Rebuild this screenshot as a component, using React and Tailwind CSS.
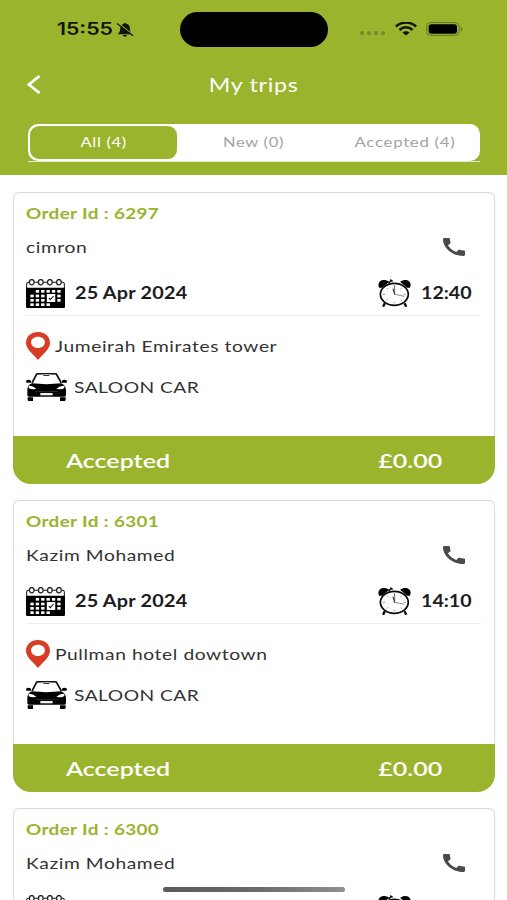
import React from "react";

const trips = [
  { id: "6297", name: "cimron", date: "25 Apr 2024", time: "12:40", place: "Jumeirah Emirates tower", car: "SALOON CAR", status: "Accepted", price: "£0.00" },
  { id: "6301", name: "Kazim Mohamed", date: "25 Apr 2024", time: "14:10", place: "Pullman hotel dowtown", car: "SALOON CAR", status: "Accepted", price: "£0.00" },
  { id: "6300", name: "Kazim Mohamed" },
];

const BellOff = () => (
  <svg className="ml-[2px] h-4 w-[18px]" viewBox="0 0 18 16" fill="none">
    <path d="M2 11.8C4 10.2 4 8.8 4.3 6 4.7 3.2 6 2.2 7.6 1.8 8 .6 10 .6 10.4 1.8c2 .4 3.1 1.8 3.4 4.2.3 2.8.4 4.2 2.3 5.8v.4H2zM6.8 13h4.4c-.3 2.3-4 2.3-4.4 0z" fill="#10150a" />
    <path d="M1.6 .8l15.8 12.2" stroke="#9ab42d" strokeWidth="1.2" />
    <path d="M1 1.6l16 12.2" stroke="#10150a" strokeWidth="1.2" />
  </svg>
);

const Wifi = () => (
  <svg className="h-[14px] w-[22px]" viewBox="0 0 22 14" fill="none" stroke="#10150a" strokeWidth="2.5">
    <path d="M.9 4.5C6.4-.7 15.6-.7 21.1 4.5" />
    <path d="M4.5 8c3.8-3.6 9.2-3.6 13 0" />
    <path d="M7.5 10.6c2-1.9 5-1.9 7 0L11 13.6z" fill="#10150a" stroke="none" />
  </svg>
);

const Battery = () => (
  <svg className="h-[14px] w-[37px]" viewBox="0 0 37 14">
    <rect x=".6" y=".6" width="32.6" height="12.8" rx="4" fill="none" stroke="#64762a" />
    <rect x="2.6" y="2.3" width="28.4" height="9.4" rx="2.6" fill="#000" />
    <path d="M34.8 4.8c2 .6 2 3.8 0 4.4z" fill="#64762a" />
  </svg>
);

const Calendar = () => (
  <svg className="h-[29px] w-[39px]" viewBox="0 0 116 87" preserveAspectRatio="none">
    <path d="M2 28V15q0-5 5-5h102q5 0 5 5v13" fill="#fff" stroke="#111" strokeWidth="3" />
    <path d="M0 26h116v57q0 4-4 4H4q-4 0-4-4z" fill="#000" />
    {[17, 44, 71, 98].map((x) => (
      <ellipse key={x} cx={x} cy="9.5" rx="7" ry="8" fill="#fff" stroke="#222" strokeWidth="3.8" />
    ))}
    <g fill="#fff">
      {[29, 45, 61, 77, 93].map((x) => <rect key={x} x={x} y="33" width="10" height="8" />)}
      {[13, 29, 45, 93].map((x) => <rect key={x} x={x} y="47" width="10" height="8" />)}
      {[13, 29, 45, 93].map((x) => <rect key={x} x={x} y="60" width="10" height="8" />)}
      {[13, 29, 45, 61].map((x) => <rect key={x} x={x} y="73" width="10" height="8" />)}
      <rect x="62" y="45" width="25" height="24" />
    </g>
    <path d="M68 57l4 5 10-11" fill="none" stroke="#111" strokeWidth="3" />
  </svg>
);

const Clock = () => (
  <svg className="h-7 w-[33px]" viewBox="0 0 97 84" preserveAspectRatio="none">
    <path d="M20 73l-5 10M78 73l5 10" stroke="#000" strokeWidth="7" />
    <path d="M3 26C-5 6 16-4 33 8L12 26z" fill="#000" />
    <path d="M94 26c8-20-12-30-29-18l20 18z" fill="#000" />
    <path d="M31 12l9-8M36 2l7 5" stroke="#000" strokeWidth="4" />
    <ellipse cx="48" cy="46" rx="41" ry="33" fill="#fff" stroke="#0a0a0a" strokeWidth="5" />
    <path d="M48 18v5M48 68v5M14 46h7M75 46h7M26 27l4 4M70 27l-4 4M25 65l4-4M71 65l-4-4" stroke="#888" strokeWidth="2.5" />
    <path d="M49 46V20" stroke="#555" strokeWidth="2.5" />
    <path d="M49 46l-5-17" stroke="#222" strokeWidth="3" />
    <path d="M46 45l31 7" stroke="#777" strokeWidth="2.5" />
  </svg>
);

const Phone = () => (
  <svg className="h-[18px] w-[22px]" viewBox="3 3 18 18" preserveAspectRatio="none">
    <path d="M20.01 15.38c-1.23 0-2.42-.2-3.53-.56a.98.98 0 0 0-1.01.24l-1.57 1.97c-2.83-1.35-5.48-3.9-6.89-6.83l1.95-1.66c.27-.28.35-.67.24-1.02-.37-1.11-.56-2.3-.56-3.53 0-.54-.45-.99-.99-.99H4.19C3.65 3 3 3.24 3 3.99 3 13.28 10.73 21 20.01 21c.71 0 .99-.63.99-1.18v-3.45c0-.54-.45-.99-.99-.99z" fill="#4a4a4c" />
  </svg>
);

const Pin = () => (
  <svg className="h-7 w-6" viewBox="0 0 70 82" preserveAspectRatio="none">
    <path fillRule="evenodd" d="M35 0C15 0 0 13 0 32c0 18 20 31 35 50 15-19 35-32 35-50C70 13 55 0 35 0zm0 14c12 0 20 7 20 16s-8 17-20 17-20-8-20-17 8-16 20-16z" fill="#d93c25" />
  </svg>
);

const Car = () => (
  <svg className="h-7 w-[41px]" viewBox="0 0 123 84" preserveAspectRatio="none">
    <path d="M18 30L32 3q29-4 59 0l15 27" fill="none" stroke="#111" strokeWidth="5" />
    <path d="M52 6h18v3H52z" fill="#333" />
    <path d="M0 23q8-5 15 0v6H1zM123 23q-8-5-15 0v6h14z" fill="#000" />
    <path d="M18 31q43 5 87 0 14 5 15 21v14q0 5-5 5H9q-5 0-5-5V52q0-16 14-21z" fill="#000" />
    <path d="M5 73h16v11H8q-3 0-3-4zM102 73h17v7q0 4-4 4h-13z" fill="#000" />
    <path d="M8 38q12-1 23 9-14 5-23-2zM115 38q-13-1-24 9 15 5 24-2z" fill="#fff" />
    <path d="M43 60h37v7H43z" fill="#eee" />
    <path d="M28 55q32 3 67 0" stroke="#555" fill="none" strokeWidth="1.5" />
  </svg>
);

const TripCard = ({ trip }) => (
  <div className="flex h-[292px] w-full shrink-0 flex-col rounded-t-[6px] rounded-b-[18px] border-[1.5px] border-b-0 border-[#d9dadc] bg-white">
    <div className="flex grow flex-col pr-[13px] pl-[12px]">
      <div className="mt-[6px] flex h-7 items-center text-[16px] font-bold whitespace-pre text-[#9ab42d]">
        <span className="origin-left scale-x-[1.18] tracking-[0.3px]">Order Id : {trip.id}</span>
      </div>
      <div className="flex h-10 items-center justify-between pr-[16px] text-[16px] text-[#333]">
        <span className="origin-left scale-x-[1.2] tracking-[0.5px]">{trip.name}</span>
        <Phone />
      </div>
      <div className="mt-[4px] flex h-[45px] items-center border-b border-[#eee] text-[16.5px] font-bold text-[#1c1c1e]">
        <Calendar />
        <span className="ml-[10px] origin-left scale-x-[1.2] pt-[1px] tracking-[0.2px]">{trip.date}</span>
        <div className="ml-auto flex w-[103px] items-center">
          <Clock />
          <span className="ml-[10px] origin-left scale-x-[1.19] pt-[1px]">{trip.time}</span>
        </div>
      </div>
      {trip.place && (
        <div className="mt-[9px] flex h-[42px] items-center text-[16px] text-[#333]">
          <Pin />
          <span className="ml-[5px] origin-left scale-x-[1.2] tracking-[0.5px]">{trip.place}</span>
        </div>
      )}
      {trip.car && (
        <div className="flex h-10 items-center text-[16px] text-[#333]">
          <Car />
          <span className="ml-[7px] origin-left scale-x-[1.2] tracking-[0.4px]">{trip.car}</span>
        </div>
      )}
    </div>
    <div className="-mx-[1px] flex h-[48px] items-center justify-between rounded-b-[18px] bg-[#9ab42d] pr-[53px] pl-[53px] text-[20px] font-semibold text-white">
      <span className="origin-left scale-x-[1.25]">{trip.status}</span>
      <span className="origin-right scale-x-[1.25]">{trip.price}</span>
    </div>
  </div>
);

export default function App() {
  return (
    <div className="relative flex h-[900px] w-[507px] flex-col overflow-hidden bg-white font-['Lato',sans-serif]">
      <header className="h-[175px] shrink-0 bg-[#9ab42d]">
        <div className="flex h-[59px] items-center">
          <div className="flex w-[180px] items-center pt-[1px] pl-[57px]">
            <span className="w-[57px] font-['Inter',sans-serif] text-[17px] font-semibold whitespace-nowrap text-[#10150a]">
              <span className="inline-block origin-left scale-x-[1.25]">15:55</span>
            </span>
            <BellOff />
          </div>
          <div className="h-[35px] w-[148px] rounded-full bg-black" />
          <div className="flex items-center pb-[2px] pl-[32px]">
            <div className="mt-[9px] mr-[10px] flex gap-[3px]">
              <i className="size-[4px] rounded-[1.5px] bg-[#788b2c]" />
              <i className="size-[4px] rounded-[1.5px] bg-[#788b2c]" />
              <i className="size-[4px] rounded-[1.5px] bg-[#788b2c]" />
              <i className="size-[4px] rounded-[1.5px] bg-[#788b2c]" />
            </div>
            <Wifi />
            <span className="w-[9px]" />
            <Battery />
          </div>
        </div>
        <div className="flex h-[51px] items-center px-[27px]">
          <svg className="h-[19px] w-[14px]" viewBox="0 0 14 19" fill="none" stroke="#fff" strokeWidth="2.8">
            <path d="M12.5 1L2 9.5 12.5 18" />
          </svg>
          <h1 className="grow pr-[13px] pb-[2px] text-center text-[20px] text-white">
            <span className="inline-block scale-x-[1.16] tracking-[0.6px]">My trips</span>
          </h1>
        </div>
        <div className="mr-[27px] ml-[28px] mt-[14px] border-b border-[#e4ebc6]">
          <div className="grid h-[37px] grid-cols-[149px_153px_150px] items-center rounded-[10px] bg-white text-center text-[14px] text-[#a3a3a3]">
            <div className="m-[2px] mr-0 flex h-[33px] items-center justify-center rounded-[9px] bg-[#9ab42d] pb-[2px] text-white">
              <span className="scale-x-[1.18] tracking-[0.6px]">All (4)</span>
            </div>
            <span className="scale-x-[1.18] pb-[2px] tracking-[0.6px]">New (0)</span>
            <span className="scale-x-[1.2] pb-[2px] tracking-[0.6px]">Accepted (4)</span>
          </div>
        </div>
      </header>
      <main className="flex flex-col gap-4 pt-[17px] pr-[12px] pl-[13px]">
        {trips.map((trip) => (
          <TripCard key={trip.id} trip={trip} />
        ))}
      </main>
      <div className="absolute top-[887px] left-[163px] h-[5px] w-[182px] rounded-full bg-linear-to-r from-[#5a5a5a] via-[#6a6a6a] to-[#909090]" />
    </div>
  );
}
